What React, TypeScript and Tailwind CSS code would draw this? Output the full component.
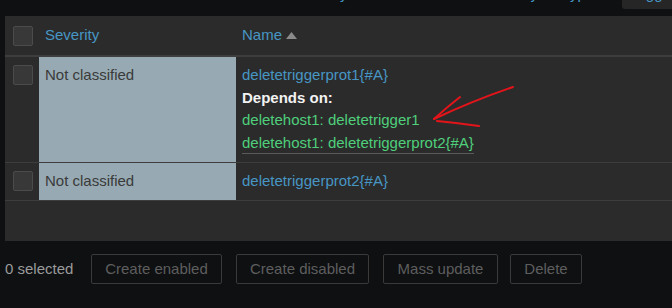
import React from "react";

function Checkbox() {
  return <div className="w-[20px] h-[20px] rounded-[2px] border border-[#4b4b4b] bg-[#383838]" />;
}

export default function App() {
  return (
    <div
      className="relative w-[672px] h-[308px] overflow-hidden bg-[#0e1012] text-[15px]"
      style={{ fontFamily: '"Liberation Sans", Arial, sans-serif' }}
    >
      {/* cut-off top strip */}
      <div className="flex h-[16px] overflow-hidden items-start">
        <span className="ml-[340px] -mt-[14px] leading-[16px] text-[#4796c4]">y</span>
        <span className="ml-[178px] -mt-[14px] leading-[16px] text-[#4796c4]">ry</span>
        <span className="ml-[32px] -mt-[14px] leading-[16px] text-[#4796c4]">yp</span>
        <div className="ml-[36px] h-[9px] w-[60px] rounded-bl-[3px] bg-[#262626] overflow-hidden">
          <span className="block ml-[24px] -mt-[14px] leading-[16px] text-[#4796c4]">gg</span>
        </div>
      </div>

      {/* table panel */}
      <div className="ml-[5px] h-[225px] bg-[#2b2b2b]">
        {/* header */}
        <div className="flex h-[41px] border-b-2 border-[#3e3e3e]">
          <div className="w-[34px] pl-[8px] pt-[10px]">
            <Checkbox />
          </div>
          <div className="w-[197px] pl-[6px] flex items-center text-[#4796c4]">Severity</div>
          <div className="flex-1 pl-[6px] flex items-center text-[#4796c4]">
            Name
            <svg className="ml-[4px]" width="11" height="7" viewBox="0 0 11 7">
              <path d="M0 7 L5.5 0 L11 7 Z" fill="#8a8a8a" />
            </svg>
          </div>
        </div>

        {/* row 1 */}
        <div className="flex h-[106px] border-b border-[#3d3d3d]">
          <div className="w-[34px] pl-[8px] pt-[8px]">
            <Checkbox />
          </div>
          <div className="w-[197px] bg-[#97aab3] pl-[6px] pt-[7px] leading-[22.5px] text-[#3a3a3a]">
            Not classified
          </div>
          <div className="flex-1 pl-[6px] pt-[7px] leading-[22.5px] flex flex-col items-start">
            <span className="text-[#4796c4]">deletetriggerprot1{"{#A}"}</span>
            <span className="font-bold text-[#f2f2f2]">Depends on:</span>
            <span className="text-[#4fcf7b]">deletehost1: deletetrigger1</span>
            <span className="text-[#4fcf7b] leading-[20px] mt-[1px] border-b border-[#5a5a5a]">
              deletehost1: deletetriggerprot2{"{#A}"}
            </span>
          </div>
        </div>

        {/* row 2 */}
        <div className="flex h-[38px] border-b border-[#3d3d3d]">
          <div className="w-[34px] pl-[8px] pt-[8px]">
            <Checkbox />
          </div>
          <div className="w-[197px] bg-[#97aab3] pl-[6px] pt-[7px] leading-[22.5px] text-[#3a3a3a]">
            Not classified
          </div>
          <div className="flex-1 pl-[6px] pt-[7px] leading-[22.5px] text-[#4796c4]">
            deletetriggerprot2{"{#A}"}
          </div>
        </div>
      </div>

      {/* footer */}
      <div className="flex items-center mt-[13px] h-[30px]">
        <span className="ml-[5px] w-[86px] text-[#9b9b9b]">0 selected</span>
        <div className="w-[131px] h-[30px] flex items-center justify-center border border-[#3a3a3a] rounded-[2px] text-[#5e5e5e]">
          Create enabled
        </div>
        <div className="ml-[14px] w-[133px] h-[30px] flex items-center justify-center border border-[#3a3a3a] rounded-[2px] text-[#5e5e5e]">
          Create disabled
        </div>
        <div className="ml-[14px] w-[115px] h-[30px] flex items-center justify-center border border-[#3a3a3a] rounded-[2px] text-[#5e5e5e]">
          Mass update
        </div>
        <div className="ml-[12px] w-[72px] h-[30px] flex items-center justify-center border border-[#3a3a3a] rounded-[2px] text-[#5e5e5e]">
          Delete
        </div>
      </div>

      {/* red annotation arrow */}
      <svg
        className="absolute left-0 top-0 pointer-events-none"
        width="672"
        height="308"
        viewBox="0 0 672 308"
      >
        <g fill="none" stroke="#e3141a" strokeWidth="2" strokeLinecap="round">
          <path d="M513 87 Q 472 101 434 119" />
          <path d="M460 97 Q 446 108 434 119" />
          <path d="M437 121 Q 458 123 479 126" />
        </g>
      </svg>
    </div>
  );
}
